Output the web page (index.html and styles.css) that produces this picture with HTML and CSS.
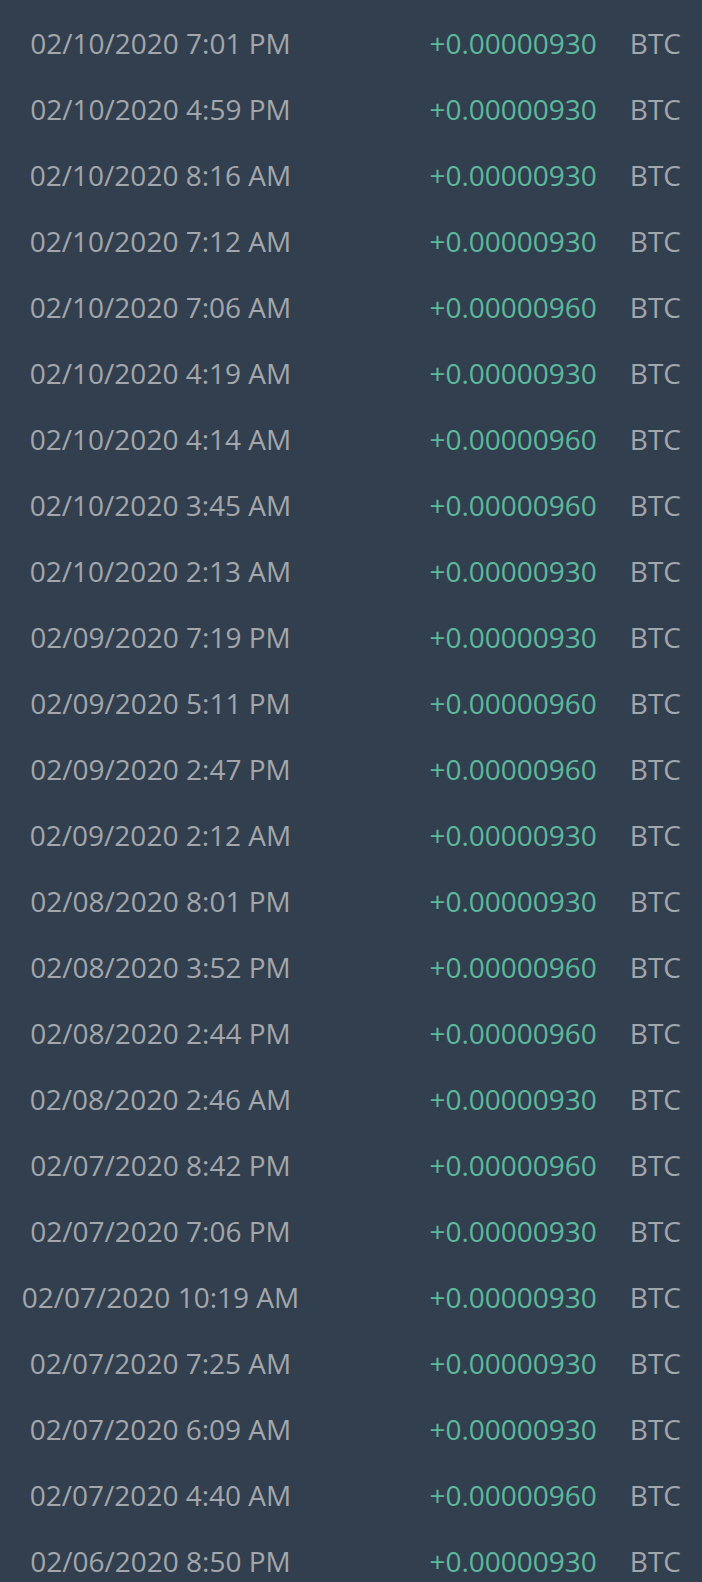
FILE: index.html
```html
<!DOCTYPE html>
<html lang="en">
<head>
    <meta charset="UTF-8">
    <meta name="viewport" content="width=device-width, initial-scale=1.0">
    <title>Transactions</title>
    <link rel="stylesheet" href="styles.css">
</head>
<body>
    <ul class="tx-list">
        <li><span class="date">02/10/2020 7:01 PM</span><span class="amount">+0.00000930</span><span class="coin">BTC</span></li>
        <li><span class="date">02/10/2020 4:59 PM</span><span class="amount">+0.00000930</span><span class="coin">BTC</span></li>
        <li><span class="date">02/10/2020 8:16 AM</span><span class="amount">+0.00000930</span><span class="coin">BTC</span></li>
        <li><span class="date">02/10/2020 7:12 AM</span><span class="amount">+0.00000930</span><span class="coin">BTC</span></li>
        <li><span class="date">02/10/2020 7:06 AM</span><span class="amount">+0.00000960</span><span class="coin">BTC</span></li>
        <li><span class="date">02/10/2020 4:19 AM</span><span class="amount">+0.00000930</span><span class="coin">BTC</span></li>
        <li><span class="date">02/10/2020 4:14 AM</span><span class="amount">+0.00000960</span><span class="coin">BTC</span></li>
        <li><span class="date">02/10/2020 3:45 AM</span><span class="amount">+0.00000960</span><span class="coin">BTC</span></li>
        <li><span class="date">02/10/2020 2:13 AM</span><span class="amount">+0.00000930</span><span class="coin">BTC</span></li>
        <li><span class="date">02/09/2020 7:19 PM</span><span class="amount">+0.00000930</span><span class="coin">BTC</span></li>
        <li><span class="date">02/09/2020 5:11 PM</span><span class="amount">+0.00000960</span><span class="coin">BTC</span></li>
        <li><span class="date">02/09/2020 2:47 PM</span><span class="amount">+0.00000960</span><span class="coin">BTC</span></li>
        <li><span class="date">02/09/2020 2:12 AM</span><span class="amount">+0.00000930</span><span class="coin">BTC</span></li>
        <li><span class="date">02/08/2020 8:01 PM</span><span class="amount">+0.00000930</span><span class="coin">BTC</span></li>
        <li><span class="date">02/08/2020 3:52 PM</span><span class="amount">+0.00000960</span><span class="coin">BTC</span></li>
        <li><span class="date">02/08/2020 2:44 PM</span><span class="amount">+0.00000960</span><span class="coin">BTC</span></li>
        <li><span class="date">02/08/2020 2:46 AM</span><span class="amount">+0.00000930</span><span class="coin">BTC</span></li>
        <li><span class="date">02/07/2020 8:42 PM</span><span class="amount">+0.00000960</span><span class="coin">BTC</span></li>
        <li><span class="date">02/07/2020 7:06 PM</span><span class="amount">+0.00000930</span><span class="coin">BTC</span></li>
        <li><span class="date">02/07/2020 10:19 AM</span><span class="amount">+0.00000930</span><span class="coin">BTC</span></li>
        <li><span class="date">02/07/2020 7:25 AM</span><span class="amount">+0.00000930</span><span class="coin">BTC</span></li>
        <li><span class="date">02/07/2020 6:09 AM</span><span class="amount">+0.00000930</span><span class="coin">BTC</span></li>
        <li><span class="date">02/07/2020 4:40 AM</span><span class="amount">+0.00000960</span><span class="coin">BTC</span></li>
        <li><span class="date">02/06/2020 8:50 PM</span><span class="amount">+0.00000930</span><span class="coin">BTC</span></li>
    </ul>
</body>
</html>
```

FILE: styles.css
```css
html, body {
    margin: 0;
    background: #323f4f;
}
body {
    font-family: "Open Sans", sans-serif;
    font-size: 28px;
    color: #a3a6aa;
    overflow: hidden;
    height: 1582px;
}
.tx-list {
    list-style: none;
    margin: 0;
    padding: 10px 21px 0 0;
}
.tx-list li {
    display: grid;
    grid-template-columns: 321px 1fr auto;
    height: 66px;
    line-height: 66px;
    white-space: nowrap;
}
.date {
    text-align: center;
}
.amount {
    text-align: right;
    padding-right: 33px;
    color: #5cb99b;
}
```
